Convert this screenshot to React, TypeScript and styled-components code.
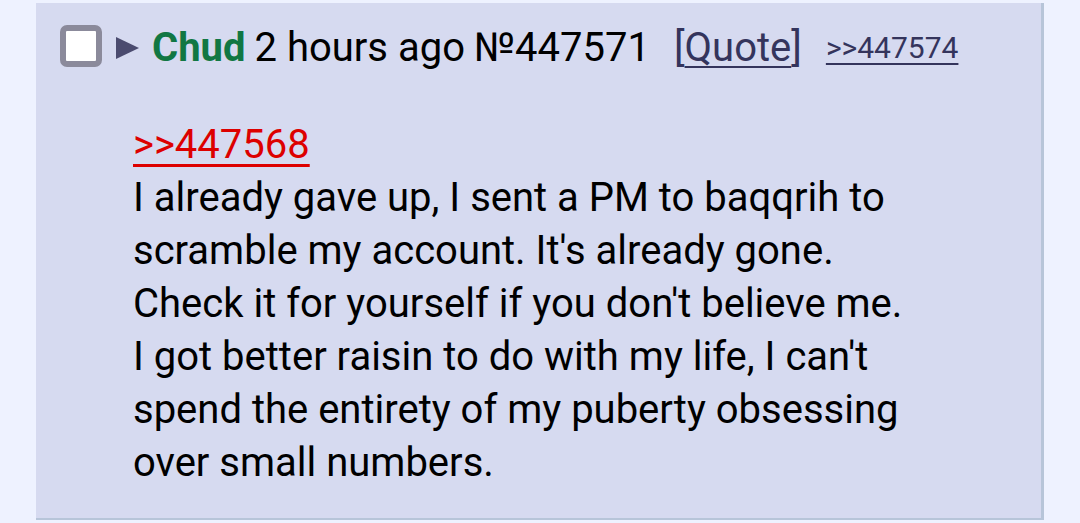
import React from "react";
import styled, { createGlobalStyle } from "styled-components";

const Global = createGlobalStyle`
  html, body { margin: 0; padding: 0; background: #eef2ff; }
  body { font-family: Roboto, "Liberation Sans", sans-serif; }
`;

const Page = styled.div`
  padding: 3px 0 0 36px;
  height: 520px;
  box-sizing: border-box;
`;

const Post = styled.div`
  width: 1005px;
  height: 515px;
  background: #d6daf0;
  border-right: 3px solid #b7c5d9;
  border-bottom: 3px solid #b7c5d9;
  box-sizing: content-box;
`;

const Header = styled.div`
  display: flex;
  align-items: center;
  padding: 23px 0 0 24px;
  height: 42px;
  font-size: 40px;
  color: #000;
  white-space: nowrap;
`;

const Check = styled.span`
  width: 30px;
  height: 30px;
  border: 6px solid #8b8a9b;
  border-radius: 7px;
  background: #fff;
  flex: none;
  margin-top: -2px;
`;

const Arrow = styled.span`
  width: 0;
  height: 0;
  border-top: 11px solid transparent;
  border-bottom: 11px solid transparent;
  border-left: 23px solid #4b4b6f;
  margin: 2px 13px 0 14px;
`;

const Name = styled.span`
  color: #117743;
  font-weight: 700;
  margin-right: 9px;
`;

const Plain = styled.span`
  margin-right: 9px;
`;

const Bracket = styled.span`
  color: #34345c;
  margin-left: 24px;
`;

const QuoteLink = styled.a`
  color: #34345c;
  text-decoration: underline;
  text-decoration-thickness: 2px;
  text-underline-offset: 5px;
`;

const Backlink = styled.a`
  color: #34345c;
  font-size: 30px;
  margin-left: 24px;
  text-decoration: underline;
  text-decoration-thickness: 2px;
  text-underline-offset: 5px;
`;

const Body = styled.div`
  padding: 50px 0 0 97px;
  font-size: 40px;
  line-height: 53px;
  color: #000;
`;

const RedQuote = styled.a`
  color: #dd0000;
  text-decoration: underline;
  text-decoration-thickness: 3px;
  text-underline-offset: 6px;
`;

const lines = [
  "I already gave up, I sent a PM to baqqrih to",
  "scramble my account. It's already gone.",
  "Check it for yourself if you don't believe me.",
  "I got better raisin to do with my life, I can't",
  "spend the entirety of my puberty obsessing",
  "over small numbers.",
];

export default function App() {
  return (
    <>
      <Global />
      <Page>
        <Post>
          <Header>
            <Check />
            <Arrow />
            <Name>Chud</Name>
            <Plain>2 hours ago</Plain>
            <span>№447571</span>
            <Bracket>
              [<QuoteLink>Quote</QuoteLink>]
            </Bracket>
            <Backlink>&gt;&gt;447574</Backlink>
          </Header>
          <Body>
            <div>
              <RedQuote>&gt;&gt;447568</RedQuote>
            </div>
            {lines.map((l) => (
              <div key={l}>{l}</div>
            ))}
          </Body>
        </Post>
      </Page>
    </>
  );
}
